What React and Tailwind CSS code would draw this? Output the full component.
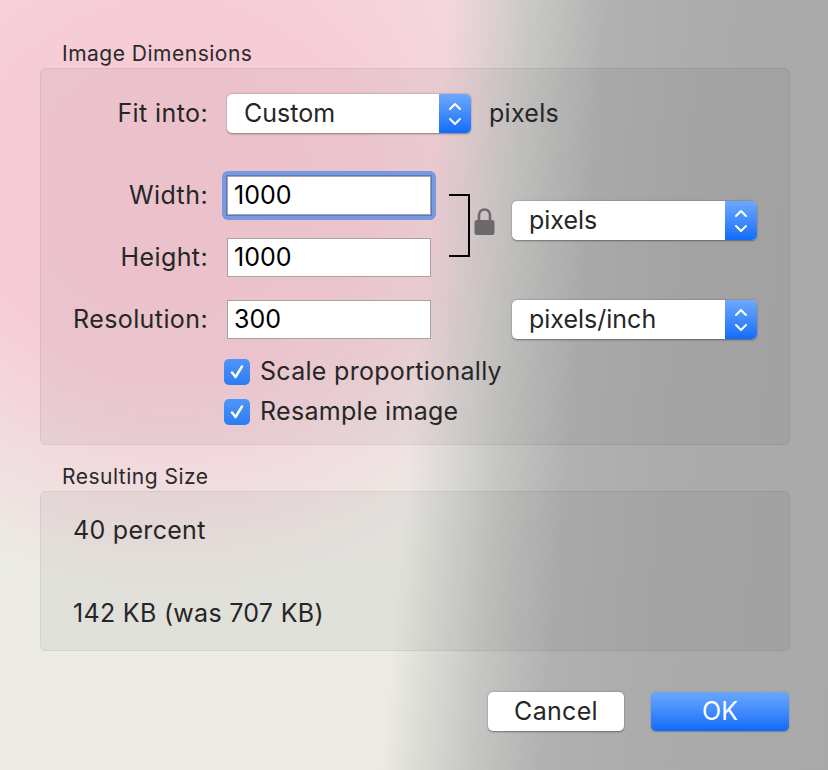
import React from "react";

const FONT = { fontFamily: "Inter, 'Liberation Sans', sans-serif" };

function Stepper() {
  return (
    <div className="flex w-[32px] items-center justify-center self-stretch rounded-r-[5px] bg-gradient-to-b from-[#6ca8fc] to-[#0d6cfb]">
      <svg width="14" height="26" viewBox="0 0 14 26" fill="none" stroke="white" strokeWidth="2" strokeLinecap="round" strokeLinejoin="round">
        <path d="M2 8 L7 3 L12 8" />
        <path d="M2 18 L7 23 L12 18" />
      </svg>
    </div>
  );
}

function Select({ value, width }) {
  return (
    <div className={`flex h-[39px] ${width} rounded-[5px] bg-white shadow-[0_0.5px_2px_rgba(0,0,0,0.4)]`}>
      <div className="flex flex-1 items-center pl-[17px] text-[25px] text-[#262626]">{value}</div>
      <Stepper />
    </div>
  );
}

function Field({ value, focused }) {
  const box = (
    <div className="flex h-[39px] w-[204px] items-center border border-[#a8a2a4] bg-white px-[6px] text-[25px] text-black">
      {value}
    </div>
  );
  if (!focused) return box;
  return (
    <div className="-m-[5px] rounded-[6px] bg-[#7699e2] p-[4px]">
      <div className="border border-[#5a78c4]">{box}</div>
    </div>
  );
}

function Label({ children }) {
  return <div className="w-[167px] text-right text-[25px] tracking-[0.4px] text-[#262626]">{children}</div>;
}

function Checkbox({ label }) {
  return (
    <div className="flex h-[40px] items-center gap-[10px]">
      <div className="flex h-[26px] w-[26px] items-center justify-center rounded-[5px] bg-gradient-to-b from-[#4f95f9] to-[#2c7df3]">
        <svg width="18" height="18" viewBox="0 0 18 18" fill="none" stroke="white" strokeWidth="2.4" strokeLinecap="round" strokeLinejoin="round">
          <path d="M4 9.5 L7.5 14 L14 3.5" />
        </svg>
      </div>
      <span className="text-[25px] tracking-[0.3px] text-[#262626]">{label}</span>
    </div>
  );
}

function Lock() {
  return (
    <svg width="21" height="29" viewBox="0 0 21 29">
      <path d="M5 14 V8 a5.5 5.5 0 0 1 11 0 V14" fill="none" stroke="#6d6869" strokeWidth="2.6" />
      <rect x="0.5" y="13" width="20" height="15" rx="2.5" fill="#6d6869" />
    </svg>
  );
}

export default function App() {
  return (
    <div
      style={FONT}
      className="flex h-[770px] w-[828px] flex-col pl-[40px] pr-[38px] pt-[40px] bg-[linear-gradient(95deg,rgba(172,172,172,0)_0%,rgba(172,172,172,0)_50%,#c6c6c4_60%,#b1b1b1_68%,#ababab_80%,#a9a9a9_100%),radial-gradient(ellipse_430px_400px_at_170px_190px,#f6cad5_0%,#f6ccd6_45%,rgba(246,204,214,0)_100%),linear-gradient(180deg,#f4dde2_0%,#ecebe6_60%,#ebebe3_100%)]"
    >
      <div className="pl-[22px] text-[21px] leading-[28px] tracking-[0.5px] text-[#2a2a2a]">Image Dimensions</div>

      <div className="flex flex-col rounded-[6px] border border-black/[0.06] bg-black/[0.045] pt-[25px] pb-[12px]">
        {/* Fit into */}
        <div className="flex items-center">
          <Label>Fit into:</Label>
          <div className="ml-[19px]">
            <Select value="Custom" width="w-[244px]" />
          </div>
          <span className="ml-[18px] text-[25px] tracking-[0.3px] text-[#262626]">pixels</span>
        </div>

        {/* Width / Height */}
        <div className="mt-[43px] flex items-start">
          <div className="flex flex-col gap-[23px]">
            <div className="flex items-center">
              <Label>Width:</Label>
              <div className="ml-[19px]">
                <Field value="1000" focused />
              </div>
            </div>
            <div className="flex items-center">
              <Label>Height:</Label>
              <div className="ml-[19px]">
                <Field value="1000" />
              </div>
            </div>
          </div>
          <div className="ml-[18px] mt-[18px] h-[63px] w-[21px] border-y-2 border-r-2 border-black" />
          <div className="ml-[4px] mt-[31px]">
            <Lock />
          </div>
          <div className="ml-[17px] mt-[25px]">
            <Select value="pixels" width="w-[245px]" />
          </div>
        </div>

        {/* Resolution */}
        <div className="mt-[23px] flex items-center">
          <Label>Resolution:</Label>
          <div className="ml-[19px]">
            <Field value="300" />
          </div>
          <div className="ml-[81px]">
            <Select value="pixels/inch" width="w-[245px]" />
          </div>
        </div>

        <div className="mt-[13px] flex flex-col pl-[183px]">
          <Checkbox label="Scale proportionally" />
          <Checkbox label="Resample image" />
        </div>
      </div>

      <div className="pl-[22px] pt-[18px] text-[21px] leading-[28px] tracking-[0.5px] text-[#2a2a2a]">Resulting Size</div>

      <div className="flex h-[160px] flex-col rounded-[6px] border border-black/[0.06] bg-black/[0.045] pl-[32px] text-[25px] tracking-[0.3px] text-[#262626]">
        <div className="mt-[23px] leading-[30px]">40 percent</div>
        <div className="mt-[53px] leading-[30px]">142 KB (was 707 KB)</div>
      </div>

      <div className="mt-[41px] flex justify-end gap-[27px] pr-[1px]">
        <button className="h-[39px] w-[136px] rounded-[5px] bg-white text-[25px] tracking-[0.3px] text-[#262626] shadow-[0_0.5px_2px_rgba(0,0,0,0.4)]">
          Cancel
        </button>
        <button className="h-[39px] w-[138px] rounded-[5px] bg-gradient-to-b from-[#6aa7fd] to-[#0b6afb] text-[25px] text-white shadow-[0_0.5px_1.5px_rgba(0,0,0,0.25)]">
          OK
        </button>
      </div>
    </div>
  );
}
